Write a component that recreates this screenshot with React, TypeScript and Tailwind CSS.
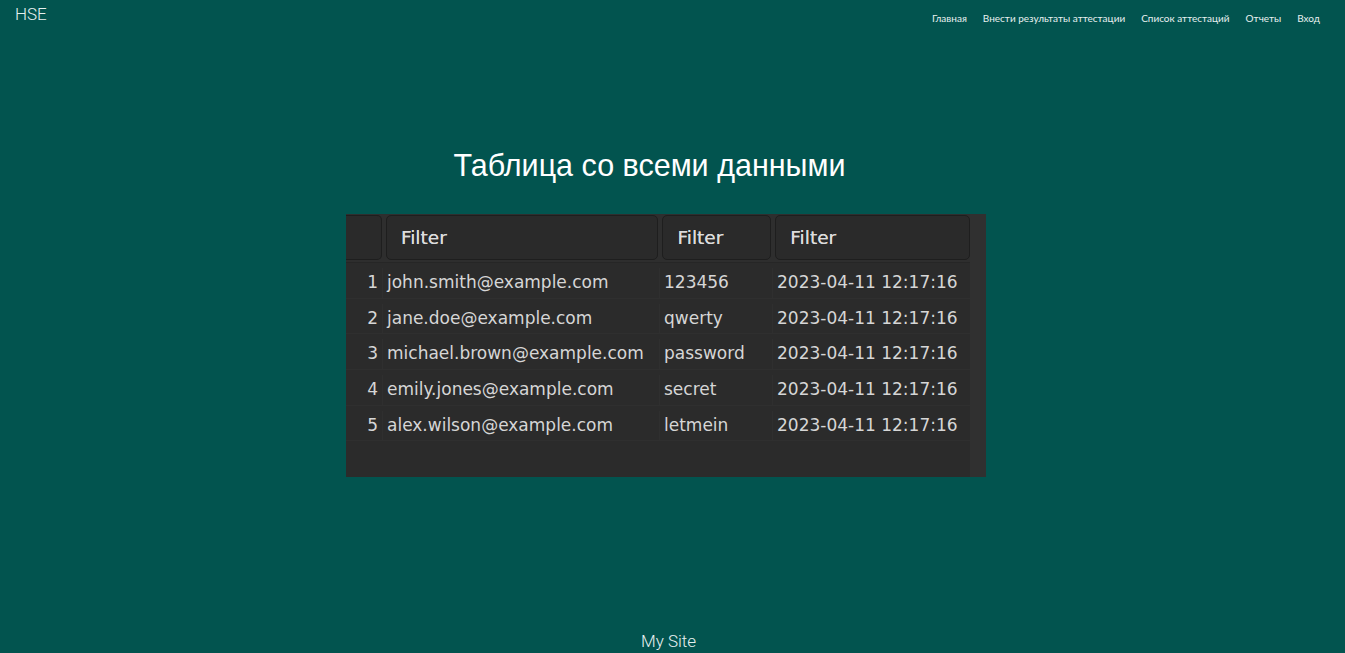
import React from "react";

const rows = [
  { id: 1, email: "john.smith@example.com", password: "123456", date: "2023-04-11 12:17:16" },
  { id: 2, email: "jane.doe@example.com", password: "qwerty", date: "2023-04-11 12:17:16" },
  { id: 3, email: "michael.brown@example.com", password: "password", date: "2023-04-11 12:17:16" },
  { id: 4, email: "emily.jones@example.com", password: "secret", date: "2023-04-11 12:17:16" },
  { id: 5, email: "alex.wilson@example.com", password: "letmein", date: "2023-04-11 12:17:16" },
];

const navLinks = ["Главная", "Внести результаты аттестации", "Список аттестаций", "Отчеты", "Вход"];

const DataTable = () => (
  <div className="w-[640px] h-[263px] bg-[#2b2b2b] flex font-['DejaVu_Sans',sans-serif] text-[#d6d6d6] overflow-hidden">
    <div className="w-[624px] flex flex-col">
      {/* header with filter inputs */}
      <div className="h-[49px] bg-[#2e2e2e] flex items-start pt-[1px] gap-[4px] border-b border-[#262626]">
        <div className="w-[36px] h-[45px] bg-[#2a2a2a] border border-[#1e1e1e] border-l-0 rounded-r-[5px]" />
        <div className="w-[273px] h-[45px] bg-[#2a2a2a] border border-[#1e1e1e] rounded-[5px] flex items-center pl-[14px] text-[18.5px] text-[#dcdcdc] [text-shadow:0_0_0.4px_#dcdcdc]">
          Filter
        </div>
        <div className="w-[109px] h-[45px] bg-[#2a2a2a] border border-[#1e1e1e] rounded-[5px] flex items-center pl-[14px] text-[18.5px] text-[#dcdcdc] [text-shadow:0_0_0.4px_#dcdcdc]">
          Filter
        </div>
        <div className="w-[195px] h-[45px] bg-[#2a2a2a] border border-[#1e1e1e] rounded-[5px] flex items-center pl-[14px] text-[18.5px] text-[#dcdcdc] [text-shadow:0_0_0.4px_#dcdcdc]">
          Filter
        </div>
      </div>
      <div className="flex flex-col">
        {rows.map((r) => (
          <div key={r.id} className="h-[35.6px] flex items-center pt-[5px] text-[17px] border-b border-[#2f2f2f]">
            <div className="w-[37px] h-full flex items-center justify-end pr-[4px] border-r border-[#2f2f2f]">{r.id}</div>
            <div className="w-[277px] h-full flex items-center pl-[4px] border-r border-[#2f2f2f]">{r.email}</div>
            <div className="w-[113px] h-full flex items-center pl-[4px] border-r border-[#2f2f2f]">{r.password}</div>
            <div className="w-[197px] h-full flex items-center pl-[4px]">{r.date}</div>
          </div>
        ))}
      </div>
    </div>
    <div className="w-[16px] bg-[#303030]" />
  </div>
);

export default function App() {
  return (
    <div className="min-h-screen bg-[#02544f] flex flex-col font-['Roboto',sans-serif] text-white">
      <header className="flex justify-between items-start px-[15px] pt-[2px]">
        <a className="text-[17px] font-light text-[#e6f0ef]">HSE</a>
        <nav className="flex gap-[16px] pt-[9px] pr-[10px] text-[10px] font-['Lato',sans-serif] text-[#e8f0ef]">
          {navLinks.map((l) => (
            <a key={l}>{l}</a>
          ))}
        </nav>
      </header>

      <main className="flex-1 flex flex-col">
        <h1 className="mt-[115px] pr-[46px] text-center text-[30.5px] font-['Liberation_Sans',sans-serif] text-white">
          Таблица со всеми данными
        </h1>
        <div className="mt-[26px] ml-[346px]">
          <DataTable />
        </div>
      </main>

      <footer className="text-center pr-[8px] pb-[3px] leading-none text-[17px] font-light text-[#e6f0ef]">My Site</footer>
    </div>
  );
}
